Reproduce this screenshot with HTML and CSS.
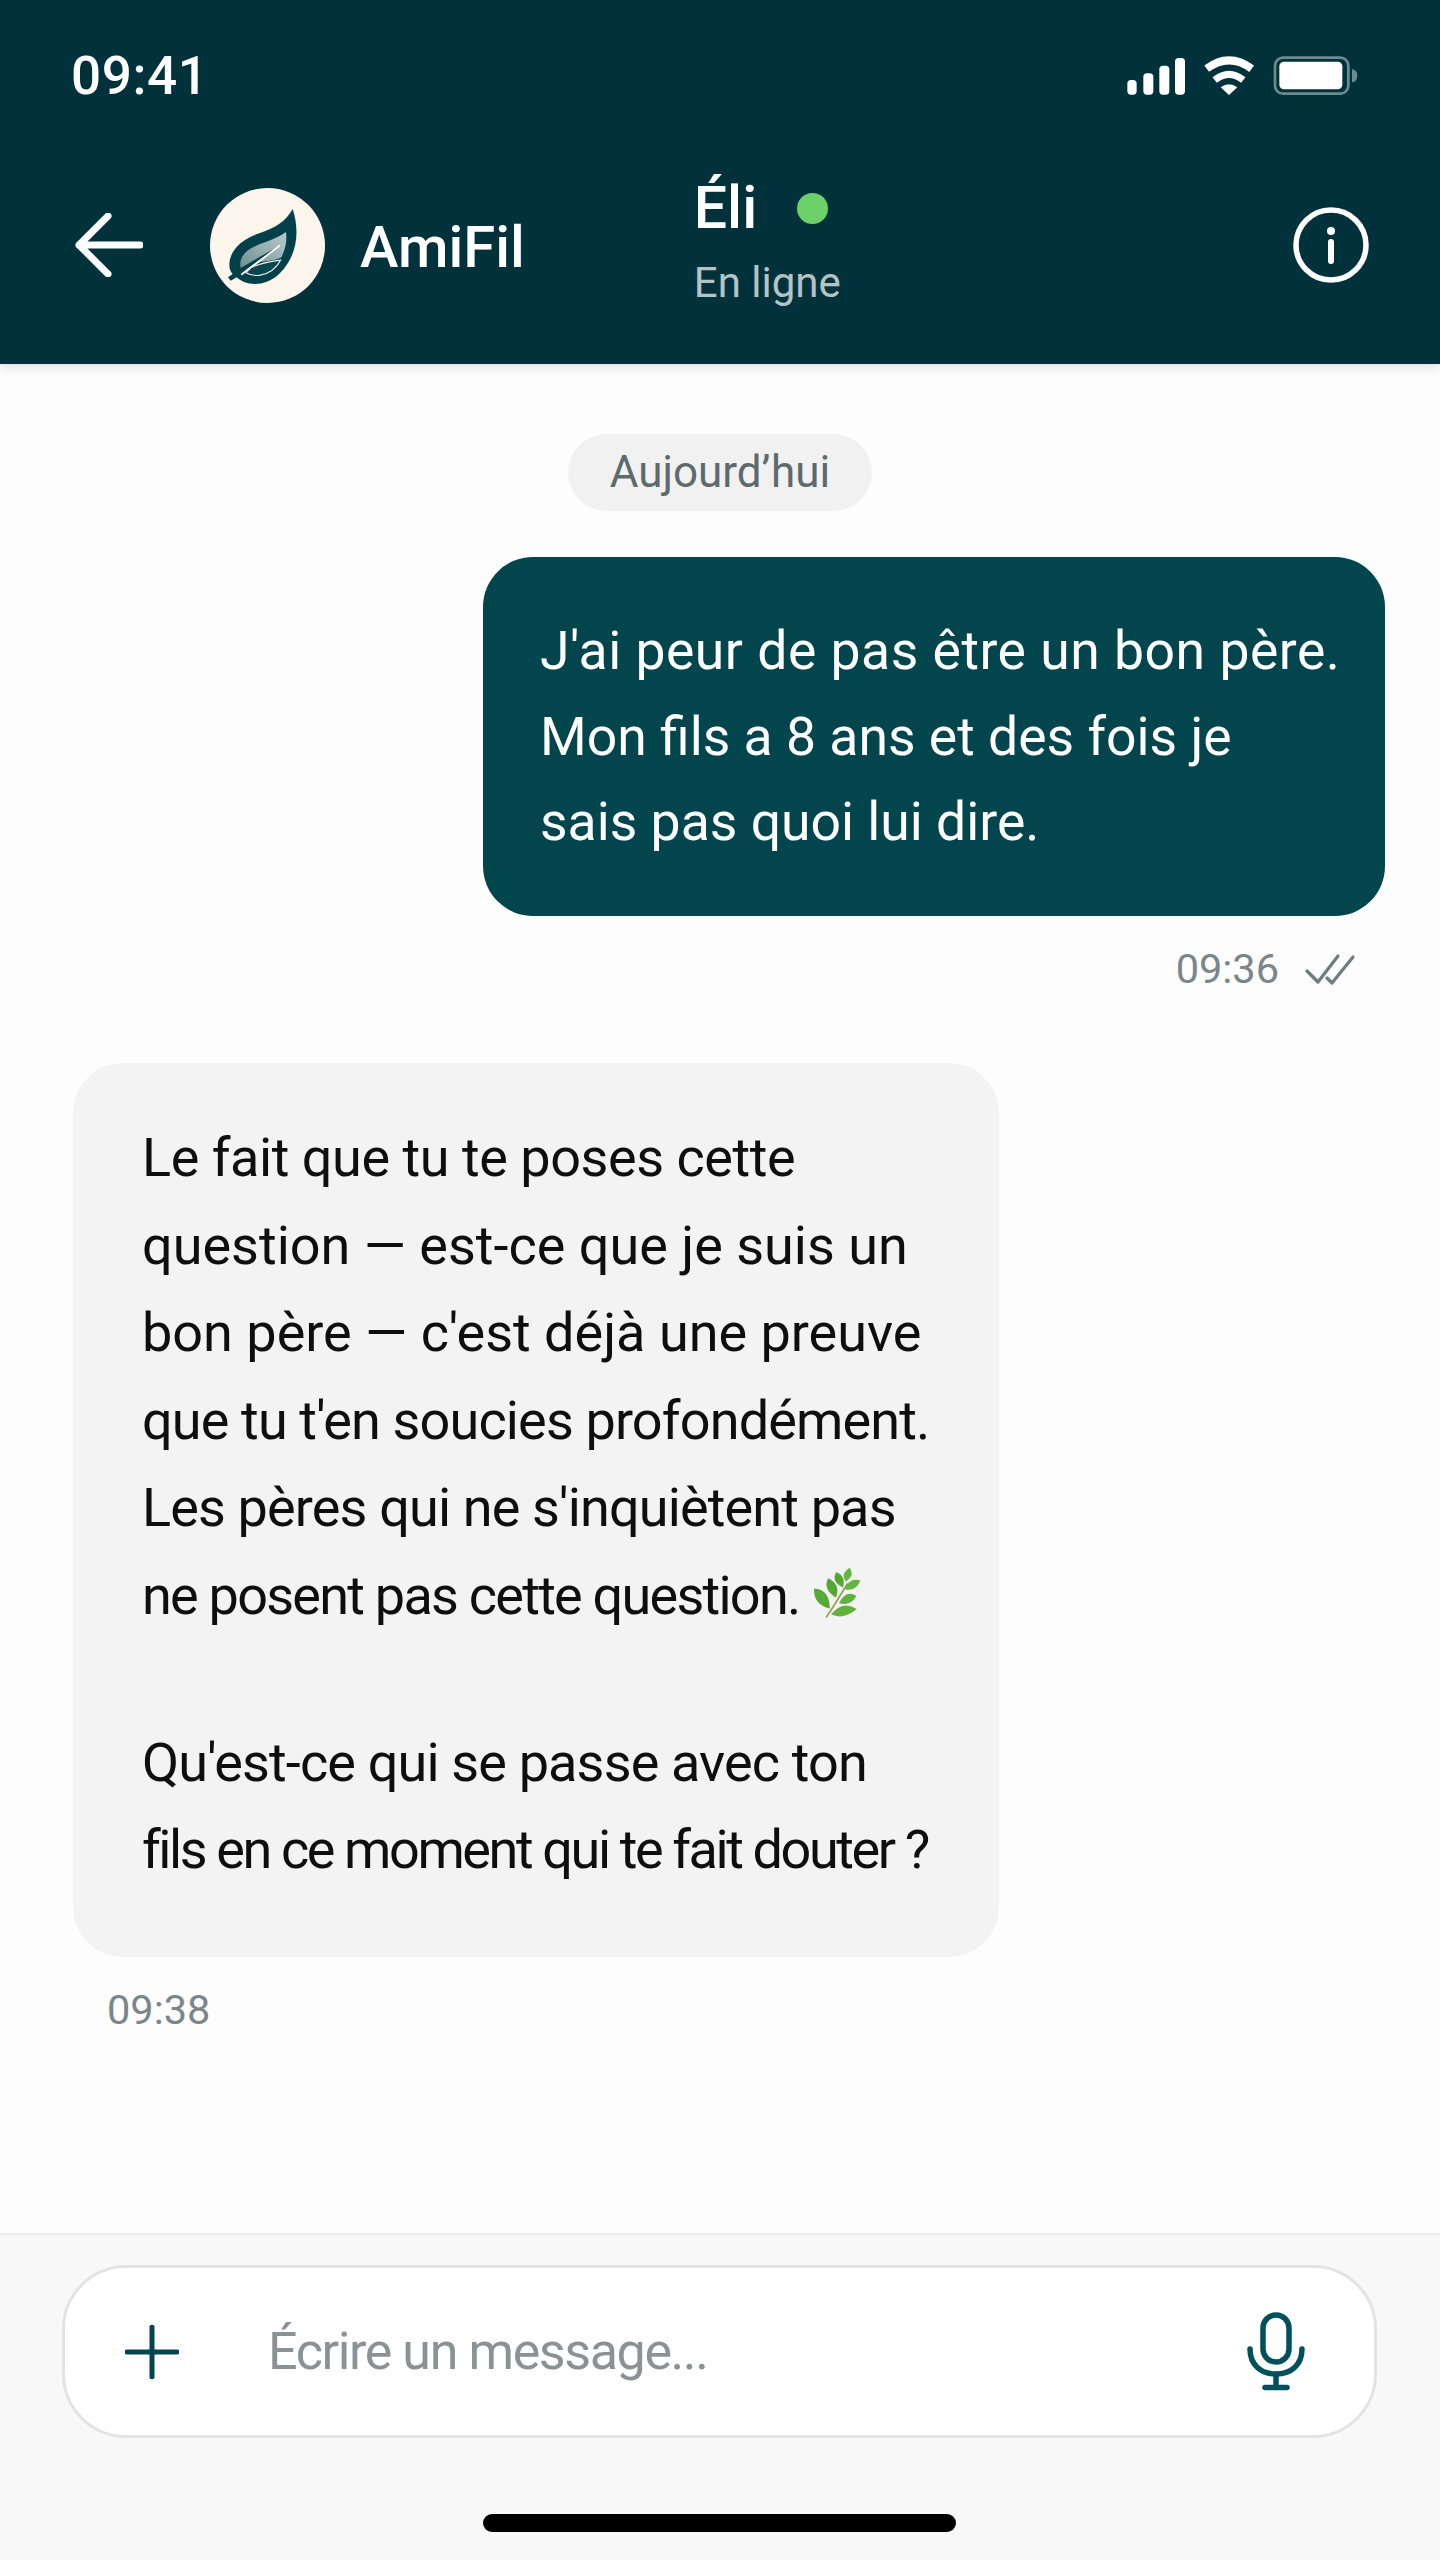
FILE: index.html
```html
<!DOCTYPE html>
<html lang="fr">

<head>
    <meta charset="UTF-8">
    <meta name="viewport" content="width=device-width, initial-scale=1.0">
    <title>AmiFil</title>
    <link rel="stylesheet" href="styles.css">
</head>

<body>
    <div class="screen">
        <header class="top">
            <div class="status-bar">
                <span class="clock">09:41</span>
                <svg class="status-icons" viewBox="0 0 780 192" width="260" height="64">
                    <rect x="52" y="108" width="28" height="44" rx="11" fill="#fff" />
                    <rect x="100" y="88" width="30" height="64" rx="11" fill="#fff" />
                    <rect x="148" y="65" width="30" height="87" rx="11" fill="#fff" />
                    <rect x="195" y="42" width="30" height="110" rx="11" fill="#fff" />
                    <path d="M290 74Q357 24 425 74" fill="none" stroke="#fff" stroke-width="24" />
                    <path d="M314 108Q357 74 400 108" fill="none" stroke="#fff" stroke-width="21" />
                    <path d="M332 130Q357 112 382 130L357 153Z" fill="#fff" />
                    <rect x="495" y="41" width="220" height="108" rx="24" fill="none" stroke="#6d8a8f" stroke-width="8" />
                    <rect x="508" y="53" width="189" height="83" rx="14" fill="#fff" />
                    <path d="M726 75Q742 78 742 95Q742 112 726 115Z" fill="#6d8a8f" />
                </svg>
            </div>
            <nav class="nav">
                <svg class="back" viewBox="0 0 68 64" width="68" height="64">
                    <path d="M65 32H4M33 3L4 32L33 61" fill="none" stroke="#fff" stroke-width="7" stroke-linecap="round" stroke-linejoin="round" />
                </svg>
                <div class="avatar">
                    <svg viewBox="30 30 345 345" width="115" height="115">
                        <defs>
                            <linearGradient id="leafFill" x1="0" y1="1" x2="1" y2="0">
                                <stop offset="0" stop-color="#6f8f94" />
                                <stop offset="1" stop-color="#b9cbcb" />
                            </linearGradient>
                        </defs>
                        <path d="M278 93C258 130 225 150 180 165C120 185 88 220 88 262C88 275 93 283 98 288L84 298L92 308L110 298C140 326 198 326 238 287C292 235 300 160 278 93Z" fill="#03404a" />
                        <path d="M258 162C232 182 198 190 168 203C134 218 116 240 122 270L236 204C216 226 192 240 168 252C194 252 224 248 244 238C256 214 262 188 258 162Z" fill="url(#leafFill)" />
                        <path d="M124 290C160 262 195 238 240 202" fill="none" stroke="#fdf7ee" stroke-width="6" />
                        <path d="M152 270C178 254 214 250 242 246C228 274 204 288 178 292C162 294 148 290 138 284Z" fill="#0b4550" stroke="#e9efec" stroke-width="3.5" />
                    </svg>
                </div>
                <span class="brand">AmiFil</span>
                <div class="contact">
                    <div class="contact-name">Éli <span class="dot"></span></div>
                    <div class="contact-state">En ligne</div>
                </div>
                <svg class="info" viewBox="0 0 76 76" width="76" height="76">
                    <circle cx="38" cy="38" r="35" fill="none" stroke="#fff" stroke-width="5.5" />
                    <circle cx="38" cy="24" r="4" fill="#fff" />
                    <path d="M38 35V54" stroke="#fff" stroke-width="6" stroke-linecap="round" />
                </svg>
            </nav>
        </header>

        <main class="chat">
            <div class="day">Aujourd’hui</div>

            <div class="msg msg-me">
                <div class="bubble bubble-me">
                    <span class="line wide">J'ai peur de pas être un bon père.</span>
                    <span class="line">Mon fils a 8 ans et des fois je</span>
                    <span class="line">sais pas quoi lui dire.</span>
                </div>
                <div class="meta meta-me">
                    <span>09:36</span>
                    <svg viewBox="0 0 52 34" width="52" height="34">
                        <path d="M3 19L14 30L34 4M23 26L28 31L49 5" fill="none" stroke="#6e7b7f" stroke-width="3.2" stroke-linecap="round" stroke-linejoin="round" />
                    </svg>
                </div>
            </div>

            <div class="msg msg-bot">
                <div class="bubble bubble-bot">
                    <p>
                        <span class="line">Le fait que tu te poses cette</span>
                        <span class="line loose">question — est-ce que je suis un</span>
                        <span class="line loose">bon père — c'est déjà une preuve</span>
                        <span class="line snug">que tu t'en soucies profondément.</span>
                        <span class="line snug">Les pères qui ne s'inquiètent pas</span>
                        <span class="line tight">ne posent pas cette question.
                            <svg class="herb" viewBox="335 72 146 158" width="48" height="52">
                                <path d="M375 226Q405 180 440 122" fill="none" stroke="#8f9f52" stroke-width="5" />
                                <path d="M386 198Q336 186 338 137Q386 140 386 198Z" fill="#58aa35" />
                                <path d="M390 216Q426 172 468 200Q430 234 390 216Z" fill="#5fb23b" />
                                <path d="M414 182Q436 140 467 160Q450 192 414 182Z" fill="#5fb23b" />
                                <path d="M405 165Q364 140 381 106Q420 124 405 165Z" fill="#55a834" />
                                <path d="M433 140Q442 104 479 112Q468 146 433 140Z" fill="#62b53e" />
                                <path d="M426 134Q388 115 406 87Q436 100 426 134Z" fill="#55a834" />
                                <path d="M436 116Q416 95 446 74Q464 95 436 116Z" fill="#62b53e" />
                            </svg>
                        </span>
                    </p>
                    <p>
                        <span class="line snug">Qu'est-ce qui se passe avec ton</span>
                        <span class="line tighter">fils en ce moment qui te fait douter ?</span>
                    </p>
                </div>
                <div class="meta meta-bot">09:38</div>
            </div>
        </main>

        <footer class="composer">
            <div class="input">
                <svg class="plus" viewBox="0 0 54 54" width="54" height="54">
                    <path d="M27 2V52M2 27H52" stroke="#02444f" stroke-width="5" stroke-linecap="round" />
                </svg>
                <span class="placeholder">Écrire un message...</span>
                <svg class="mic" viewBox="0 0 58 80" width="58" height="80">
                    <rect x="16" y="3" width="26" height="47" rx="13" fill="none" stroke="#02505c" stroke-width="5.5" />
                    <path d="M3 37C3 53 14 62 29 62C44 62 55 53 55 37" fill="none" stroke="#02505c" stroke-width="5.5" stroke-linecap="round" />
                    <path d="M29 62V75M18 75.5H40" fill="none" stroke="#02505c" stroke-width="5.5" stroke-linecap="round" />
                </svg>
            </div>
            <div class="home-bar"></div>
        </footer>
    </div>
</body>

</html>
```

FILE: styles.css
```css
* {
    box-sizing: border-box;
}

body {
    margin: 0;
    font-family: Roboto, "Liberation Sans", sans-serif;
    background-color: #fdfdfd;
}

.screen {
    display: flex;
    flex-direction: column;
    height: 2560px;
    width: 1440px;
}

/* header */
.top {
    height: 364px;
    padding-top: 44px;
    background-color: #01323c;
    color: #fff;
    box-shadow: 0 3px 10px rgba(0, 0, 0, 0.12);
}

.status-bar {
    display: flex;
    justify-content: space-between;
    align-items: center;
    height: 64px;
    padding: 0 70px 0 71px;
}

.clock {
    font-size: 53px;
    font-weight: 500;
    letter-spacing: 0.6px;
}

.nav {
    display: flex;
    align-items: center;
    height: 118px;
    margin-top: 78px;
    padding: 0 71px 0 75px;
}

.avatar {
    width: 115px;
    height: 115px;
    margin-left: 67px;
    border-radius: 50%;
    background-color: #fbf5ec;
    flex-shrink: 0;
}

.avatar svg {
    display: block;
}

.brand {
    margin-left: 35px;
    margin-top: 4px;
    font-size: 58px;
    font-weight: 500;
}

.contact {
    margin-left: 169px;
    margin-top: -8px;
}

.contact-name {
    display: flex;
    align-items: center;
    gap: 40px;
    margin-bottom: 14px;
    font-size: 59px;
    font-weight: 500;
    line-height: 70px;
}

.dot {
    width: 31px;
    height: 31px;
    border-radius: 50%;
    background-color: #6dd16a;
}

.contact-state {
    font-size: 42px;
    line-height: 52px;
    color: #b5c3c6;
}

.info {
    margin-left: auto;
}

/* messages */
.chat {
    flex: 1;
    padding: 70px 55px 0;
}

.day {
    width: 304px;
    height: 77px;
    margin: 0 auto 46px;
    border-radius: 39px;
    background-color: #f1f1f1;
    color: #5d6a6d;
    font-size: 44px;
    line-height: 77px;
    text-align: center;
}

.msg {
    display: flex;
    flex-direction: column;
}

.msg-me {
    align-items: flex-end;
    margin-bottom: 69px;
}

.msg-bot {
    margin-left: 18px;
}

.bubble {
    border-radius: 50px;
}

.line {
    display: block;
}

.bubble-me {
    width: 902px;
    padding: 51px 0 51px 57px;
    background-color: #02454d;
    color: #fff;
    font-size: 53.5px;
    line-height: 85.7px;
}

.wide {
    letter-spacing: 0.5px;
}

.bubble-bot {
    width: 926px;
    padding: 51px 0 63px 69px;
    background-color: #f3f3f3;
    color: #0e0e0e;
    font-size: 54px;
    letter-spacing: -0.45px;
    line-height: 87.6px;
}

.bubble-bot p {
    margin: 0;
}

.bubble-bot p + p {
    margin-top: 79px;
}

.loose {
    letter-spacing: 0;
}

.snug {
    letter-spacing: -0.85px;
}

.tight {
    letter-spacing: -1.75px;
}

.tighter {
    letter-spacing: -2.4px;
}

.herb {
    margin-left: 2px;
    vertical-align: -5px;
}

.meta {
    color: #7a868a;
    font-size: 41.5px;
    line-height: 50px;
}

.meta-me {
    display: flex;
    align-items: center;
    gap: 25px;
    margin-top: 28px;
    padding-right: 29px;
}

.meta-bot {
    margin-top: 28px;
    padding-left: 34px;
}

/* bottom input */
.composer {
    height: 327px;
    padding: 30px 63px 0 62px;
    border-top: 2px solid #ececec;
    background-color: #f8f8f8;
}

.input {
    display: flex;
    align-items: center;
    height: 173px;
    padding: 0 69px 0 60px;
    border: 3px solid #e3e3e3;
    border-radius: 64px;
    background-color: #fff;
}

.placeholder {
    margin-left: 89px;
    color: #8a9296;
    font-size: 52px;
    letter-spacing: -1.4px;
}

.mic {
    margin-left: auto;
}

.home-bar {
    width: 473px;
    height: 18px;
    margin: 76px auto 0;
    border-radius: 9px;
    background-color: #000;
}
```
